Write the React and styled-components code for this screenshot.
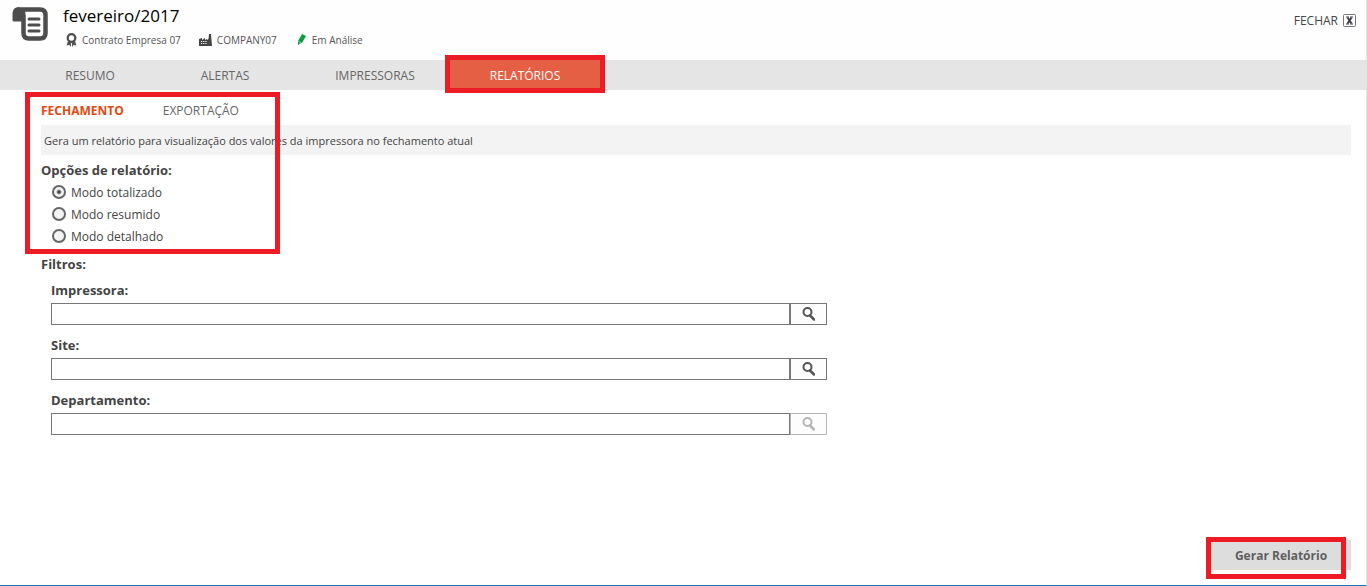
import React, { useState } from "react";
import styled, { createGlobalStyle } from "styled-components";

const GlobalStyle = createGlobalStyle`
  * {
    box-sizing: border-box;
  }
  body {
    margin: 0;
    background: #fff;
    color: #444;
    font-family: "Open Sans", "Segoe UI", sans-serif;
    font-size: 12px;
  }
  button, input {
    font-family: inherit;
  }
`;

const Page = styled.div`
  display: flex;
  flex-direction: column;
  min-height: 100vh;
  border-right: 1px solid #e5e5e5;
  border-bottom: 1px solid #1f74ac;
`;

const Header = styled.header`
  display: flex;
  height: 60px;
  padding: 6px 9px 0 12px;
  background: #fefefe;
`;

const HeaderInfo = styled.div`
  flex: 1;
  margin-left: 15px;
`;

const Title = styled.h1`
  margin: 0;
  color: #000;
  font-size: 17px;
  font-weight: 400;
  line-height: 20px;
`;

const Details = styled.div`
  display: flex;
  gap: 18px;
  margin-top: 5px;
  padding-left: 3px;
`;

const Detail = styled.span`
  display: flex;
  align-items: center;
  gap: 5px;
  color: #555;
  font-size: 10px;
  line-height: 18px;
`;

const CloseButton = styled.button`
  display: flex;
  align-items: center;
  align-self: flex-start;
  gap: 5px;
  margin-top: 6px;
  padding: 0;
  border: 0;
  background: none;
  color: #444;
  font-size: 12px;
  line-height: 18px;
  cursor: pointer;
`;

const Nav = styled.nav`
  display: flex;
  height: 30px;
  padding-left: 30px;
  background: #e5e5e5;
`;

const NavLink = styled.a`
  position: relative;
  width: ${(props) => (props.$narrow ? "120px" : "150px")};
  padding-top: 2px;
  background: ${(props) => (props.$active ? "#e45f44" : "none")};
  color: ${(props) => (props.$active ? "#fff" : "#666")};
  font-size: 12px;
  line-height: 28px;
  text-align: center;
  text-decoration: none;
`;

// red frame that sits over the part being explained
const Mark = styled.span`
  position: absolute;
  z-index: 1;
  top: ${(props) => props.$top}px;
  right: ${(props) => props.$right};
  bottom: ${(props) => props.$bottom}px;
  left: ${(props) => props.$left}px;
  width: ${(props) => props.$width || "auto"};
  border: 5px solid #ed1c24;
  pointer-events: none;
`;

const Content = styled.main`
  flex: 1;
  padding: 0 15px 0 41px;
`;

const Report = styled.section`
  position: relative;
  padding-bottom: 7px;
`;

const SubTabs = styled.nav`
  display: flex;
  gap: 39px;
  height: 35px;
  padding-top: 7px;
`;

const SubTab = styled.a`
  color: ${(props) => (props.$active ? "#e04a12" : "#666")};
  font-size: 12px;
  font-weight: ${(props) => (props.$active ? 700 : 400)};
  line-height: 28px;
  text-decoration: none;
`;

const Description = styled.p`
  margin: 0;
  padding: 2px 0 0 3px;
  background: #f3f3f3;
  font-size: 11px;
  line-height: 28px;
`;

const Options = styled.fieldset`
  margin: 0;
  padding: 0;
  border: 0;
`;

const Legend = styled.legend`
  padding: 5px 0 1px;
  font-size: 13px;
  font-weight: 700;
  line-height: 20px;
`;

const Option = styled.label`
  display: flex;
  align-items: center;
  gap: 5px;
  height: 22px;
  padding-left: 11px;
  font-size: 12px;
`;

const Radio = styled.input`
  appearance: none;
  width: 14px;
  height: 14px;
  margin: 0;
  border: 2px solid #666;
  border-radius: 50%;
  background: #f3f3f3;

  &:checked {
    background: radial-gradient(circle, #444 1px, #f3f3f3 3px);
  }
`;

const Subtitle = styled.h2`
  margin: 0;
  font-size: 13px;
  font-weight: 700;
  line-height: 20px;
`;

const Filter = styled.div`
  max-width: 786px;
  margin: 6px 0 10px;
  padding-left: 10px;

  & + & {
    margin-top: 0;
  }
`;

const FilterLabel = styled.label`
  display: block;
  padding-bottom: 3px;
  font-size: 13px;
  font-weight: 700;
  line-height: 20px;
`;

const Field = styled.div`
  display: flex;
  height: 22px;
`;

const TextBox = styled.input`
  flex: 1;
  min-width: 0;
  padding: 0 4px;
  border: 1px solid #777;
  background: #fff;
  font-size: 12px;
`;

const SearchButton = styled.button`
  display: flex;
  align-items: center;
  justify-content: center;
  width: 37px;
  padding: 0;
  border: 1px solid ${(props) => (props.disabled ? "#b5b5b5" : "#777")};
  background: #fdfdfd;
  color: ${(props) => (props.disabled ? "#b5b5b5" : "#555")};
`;

const Footer = styled.footer`
  display: flex;
  justify-content: flex-end;
  padding: 0 15px 15px;
`;

const SubmitWrap = styled.div`
  position: relative;
`;

const Submit = styled.button`
  width: 140px;
  height: 30px;
  padding: 0;
  border: 0;
  background: #ddd;
  color: #606060;
  font-size: 12px;
  font-weight: 700;
  cursor: pointer;
`;

const ScrollIcon = () => (
  <svg width="36" height="36" viewBox="0 -1 36 36" fill="none">
    <path
      d="M6 2.5H28Q33.5 2.5 33.5 8V26Q33.5 31.5 28 31.5H17Q11.5 31.5 11.5 26V9Q11.5 2.5 6 2.5"
      stroke="#4d4d4d"
      strokeWidth="4.5"
      strokeLinejoin="round"
    />
    <path d="M7 0Q0.5 0 0.5 7V13Q0.5 14.5 2 14.5H12V6Z" fill="#4d4d4d" />
    <path
      d="M17 12H27M17 18H27M17 24H27"
      stroke="#4d4d4d"
      strokeWidth="3"
      strokeLinecap="round"
    />
  </svg>
);

const MedalIcon = () => (
  <svg width="11" height="14" viewBox="0 0 11 14">
    <path d="M2 8L0.5 12.5L3.5 12L5 14V9ZM9 8L10.5 12.5L7.5 12L6 14V9Z" fill="#555" />
    <circle cx="5.5" cy="5" r="3.8" fill="#fff" stroke="#4d4d4d" strokeWidth="2.2" />
  </svg>
);

const FactoryIcon = () => (
  <svg width="13" height="13" viewBox="0 0 13 13">
    <path d="M0 12V5L3 4V6L6 4V6L8 5V6L9.5 5L10 0H12L13 12Z" fill="#444" />
    <path d="M2 7.5H8M2 9.5H8" stroke="#fff" strokeDasharray="1.2 1" />
  </svg>
);

const PencilIcon = () => (
  <svg width="12" height="12" viewBox="-2 0 12 12">
    <path d="M5 0L9 2L5 9L1 7Z" fill="#0a9e3c" />
    <path d="M1 7.5L4 9L1 11Z" fill="#0a9e3c" />
  </svg>
);

const CloseIcon = () => (
  <svg width="14" height="14" viewBox="0 0 14 14">
    <rect x="0.5" y="0.5" width="12" height="12" rx="1" fill="#fff" stroke="#77777f" />
    <path d="M4.5 3.5L8.5 9.5M8.5 3.5L4.5 9.5" stroke="#3c3c44" strokeWidth="2" />
    <path d="M3 3H6M7 3H10M3 10H6M7 10H10" stroke="#3c3c44" />
  </svg>
);

const SearchIcon = () => (
  <svg width="13" height="14" viewBox="0 0 13 14" fill="none" stroke="currentColor">
    <circle cx="5.5" cy="5" r="4" strokeWidth="2" />
    <path d="M8 8.5L12 12.5" strokeWidth="2.5" strokeLinecap="round" />
  </svg>
);

const modes = [
  { id: "totalizado", text: "Modo totalizado" },
  { id: "resumido", text: "Modo resumido" },
  { id: "detalhado", text: "Modo detalhado" },
];

const filters = [
  { id: "impressora", text: "Impressora:" },
  { id: "site", text: "Site:" },
  { id: "departamento", text: "Departamento:", disabled: true },
];

const App = () => {
  const [mode, setMode] = useState("totalizado");

  return (
    <>
      <GlobalStyle />
      <Page>
        <Header>
          <ScrollIcon />
          <HeaderInfo>
            <Title>fevereiro/2017</Title>
            <Details>
              <Detail>
                <MedalIcon />
                Contrato Empresa 07
              </Detail>
              <Detail>
                <FactoryIcon />
                COMPANY07
              </Detail>
              <Detail>
                <PencilIcon />
                Em Análise
              </Detail>
            </Details>
          </HeaderInfo>
          <CloseButton type="button">
            FECHAR
            <CloseIcon />
          </CloseButton>
        </Header>

        <Nav>
          <NavLink href="#resumo" $narrow>RESUMO</NavLink>
          <NavLink href="#alertas">ALERTAS</NavLink>
          <NavLink href="#impressoras">IMPRESSORAS</NavLink>
          <NavLink href="#relatorios" $active>
            RELATÓRIOS
            <Mark $top={-5} $right="-5px" $bottom={-3} $left={-5} />
          </NavLink>
        </Nav>

        <Content>
          <Report>
            <SubTabs>
              <SubTab href="#fechamento" $active>FECHAMENTO</SubTab>
              <SubTab href="#exportacao">EXPORTAÇÃO</SubTab>
            </SubTabs>
            <Description>
              Gera um relatório para visualização dos valores da impressora no fechamento atual
            </Description>
            <Options>
              <Legend>Opções de relatório:</Legend>
              {modes.map((item) => (
                <Option key={item.id}>
                  <Radio
                    type="radio"
                    name="modo"
                    value={item.id}
                    checked={mode === item.id}
                    onChange={() => setMode(item.id)}
                  />
                  {item.text}
                </Option>
              ))}
            </Options>
            <Mark $top={2} $right="auto" $bottom={0} $left={-16} $width="255px" />
          </Report>

          <Subtitle>Filtros:</Subtitle>
          {filters.map((item) => (
            <Filter key={item.id}>
              <FilterLabel htmlFor={item.id}>{item.text}</FilterLabel>
              <Field>
                <TextBox id={item.id} type="text" />
                <SearchButton type="button" disabled={item.disabled} aria-label="Pesquisar">
                  <SearchIcon />
                </SearchButton>
              </Field>
            </Filter>
          ))}
        </Content>

        <Footer>
          <SubmitWrap>
            <Submit type="button">Gerar Relatório</Submit>
            <Mark $top={-3} $right="5px" $bottom={-9} $left={-5} />
          </SubmitWrap>
        </Footer>
      </Page>
    </>
  );
};

export default App;
